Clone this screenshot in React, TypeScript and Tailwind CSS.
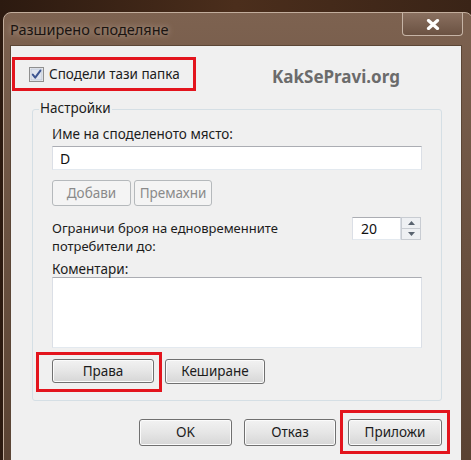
import React from 'react'

const FONT = { fontFamily: '"Noto Sans", "Liberation Sans", sans-serif' }

const BTN =
  'flex items-center justify-center rounded-[3px] border border-[#707070] bg-gradient-to-b from-[#f2f2f2] via-[#e6e6e6] to-[#d6d6d6] text-[13.5px] text-[#1c1c1c] shadow-[inset_0_0_0_1px_#fbfbfb]'
const BTN_OFF =
  'flex items-center justify-center rounded-[3px] border border-[#b5b9bc] bg-[#f4f4f4] text-[13.5px] text-[#8a8a8a]'
const RED = 'border-[3px] border-[#e3141d]'
const FIELD_BORDER = 'border border-t-[#abadb3] border-l-[#dbdfe6] border-r-[#dbdfe6] border-b-[#e3e9ef] bg-white'
const TXT = 'text-[13.5px] text-[#1c1c1c]'

function CheckBox() {
  return (
    <svg width="15" height="15" viewBox="0 0 15 15">
      <rect x="0.5" y="0.5" width="14" height="14" fill="#f4f4f4" stroke="#8f8f8f" />
      <rect x="2" y="2" width="11" height="11" fill="#dfe4ee" stroke="#b8c2d4" strokeWidth="0.8" />
      <path d="M3.8 7.6 L6.2 10.6 L11.4 3.6" fill="none" stroke="#3d5591" strokeWidth="2" strokeLinecap="round" strokeLinejoin="round" />
    </svg>
  )
}

function Spinner() {
  return (
    <div className="flex h-[23px]">
      <div className={`${FIELD_BORDER} flex w-[49px] items-center pl-[8px] text-[14px] text-[#111]`}>20</div>
      <div className="flex w-[20px] flex-col border border-[#c8ccd2] bg-[#eef0f3]">
        <div className="flex flex-1 items-center justify-center border-b border-[#c8ccd2]">
          <svg width="7" height="4" viewBox="0 0 7 4"><path d="M0 4 L3.5 0 L7 4 Z" fill="#5a6470" /></svg>
        </div>
        <div className="flex flex-1 items-center justify-center">
          <svg width="7" height="4" viewBox="0 0 7 4"><path d="M0 0 L3.5 4 L7 0 Z" fill="#5a6470" /></svg>
        </div>
      </div>
    </div>
  )
}

export default function App() {
  return (
    <div
      className="h-[460px] w-[471px] overflow-hidden bg-gradient-to-r from-[#2c1a10] via-[#4b2e1c] to-[#3a2417] pt-[12px]"
      style={FONT}
    >
      {/* window frame */}
      <div className="ml-[3px] h-[460px] w-[470px] rounded-t-[8px] border border-[#c2ad9c] bg-gradient-to-b from-[#7d6250] via-[#6a5140] to-[#5a4232]">
        {/* title bar */}
        <div className="flex h-[32px] items-start justify-between">
          <div className="pl-[6px] pt-[6px] text-[14.5px] leading-[20px] text-[#1a1411] [text-shadow:0_0_6px_rgba(255,240,225,0.55)]">
            Разширено споделяне
          </div>
          <div className="mr-[9px] flex h-[23px] w-[61px] items-center justify-center rounded-b-[4px] border border-t-0 border-[#c6b4a6] bg-gradient-to-b from-[#8a7060] to-[#6b5242]">
            <svg width="14" height="11" viewBox="0 0 14 11">
              <path d="M2.5 1.5 L11.5 9.5 M11.5 1.5 L2.5 9.5" stroke="#ffffff" strokeWidth="3.2" strokeLinecap="round" />
            </svg>
          </div>
        </div>

        {/* content */}
        <div className="ml-[6px] h-[420px] w-[452px] border border-[#5b4636] bg-[#f0f0f0]">
          <div className="flex items-center pt-[11px]">
            <div className={`${RED} ml-[1px] flex h-[34px] w-[184px] items-center pl-[14px]`}>
              <CheckBox />
              <span className={`${TXT} ml-[5px] leading-[18px]`}>Сподели тази папка</span>
            </div>
            <div className="ml-[76px] mt-[6px] text-[17px] font-bold text-[#6b6b6b]">KakSePravi.org</div>
          </div>

          {/* settings group */}
          <div className="relative ml-[21px] mt-[18px] w-[410px] rounded-[3px] border border-[#d5dfe5] px-[19px] pb-[8px] pt-[15px]">
            <span className={`${TXT} absolute -top-[11px] left-[6px] bg-[#f0f0f0] px-[1px] leading-[18px]`}>
              Настройки
            </span>
            <div className={`${TXT} leading-[18px]`}>Име на споделеното място:</div>
            <div className={`${FIELD_BORDER} mt-[3px] flex h-[24px] w-[370px] items-center pl-[7px] text-[14px] text-[#111]`}>D</div>
            <div className="mt-[10px] flex gap-[3px]">
              <div className={`${BTN_OFF} h-[26px] w-[79px]`}>Добави</div>
              <div className={`${BTN_OFF} h-[26px] w-[78px]`}>Премахни</div>
            </div>
            <div className="mt-[11px] flex items-start justify-between pr-[1px]">
              <div className="pt-[2px] text-[13px] leading-[18px] text-[#1c1c1c]">
                <div>Ограничи броя на едновременните</div>
                <div>потребители до:</div>
              </div>
              <Spinner />
            </div>
            <div className={`${TXT} mt-[6px] leading-[16px]`}>Коментари:</div>
            <div className={`${FIELD_BORDER} h-[71px] w-[370px]`} />
            <div className="mt-[4px] flex items-start">
              <div className={`${RED} -ml-[16px] pb-[6px] pl-[13px] pr-[5px] pt-[4px]`}>
                <div className={`${BTN} h-[24px] w-[102px]`}>Права</div>
              </div>
              <div className={`${BTN} ml-[3px] mt-[7px] h-[25px] w-[100px]`}>Кеширане</div>
            </div>
          </div>

          {/* dialog buttons */}
          <div className="mt-[9px] flex items-center justify-end pr-[11px]">
            <div className={`${BTN} h-[27px] w-[93px]`}>OK</div>
            <div className={`${BTN} ml-[12px] h-[27px] w-[92px]`}>Отказ</div>
            <div className={`${RED} ml-[4px] px-[5px] pb-[5px] pt-[6px]`}>
              <div className={`${BTN} h-[27px] w-[94px]`}>Приложи</div>
            </div>
          </div>
        </div>
      </div>
    </div>
  )
}
